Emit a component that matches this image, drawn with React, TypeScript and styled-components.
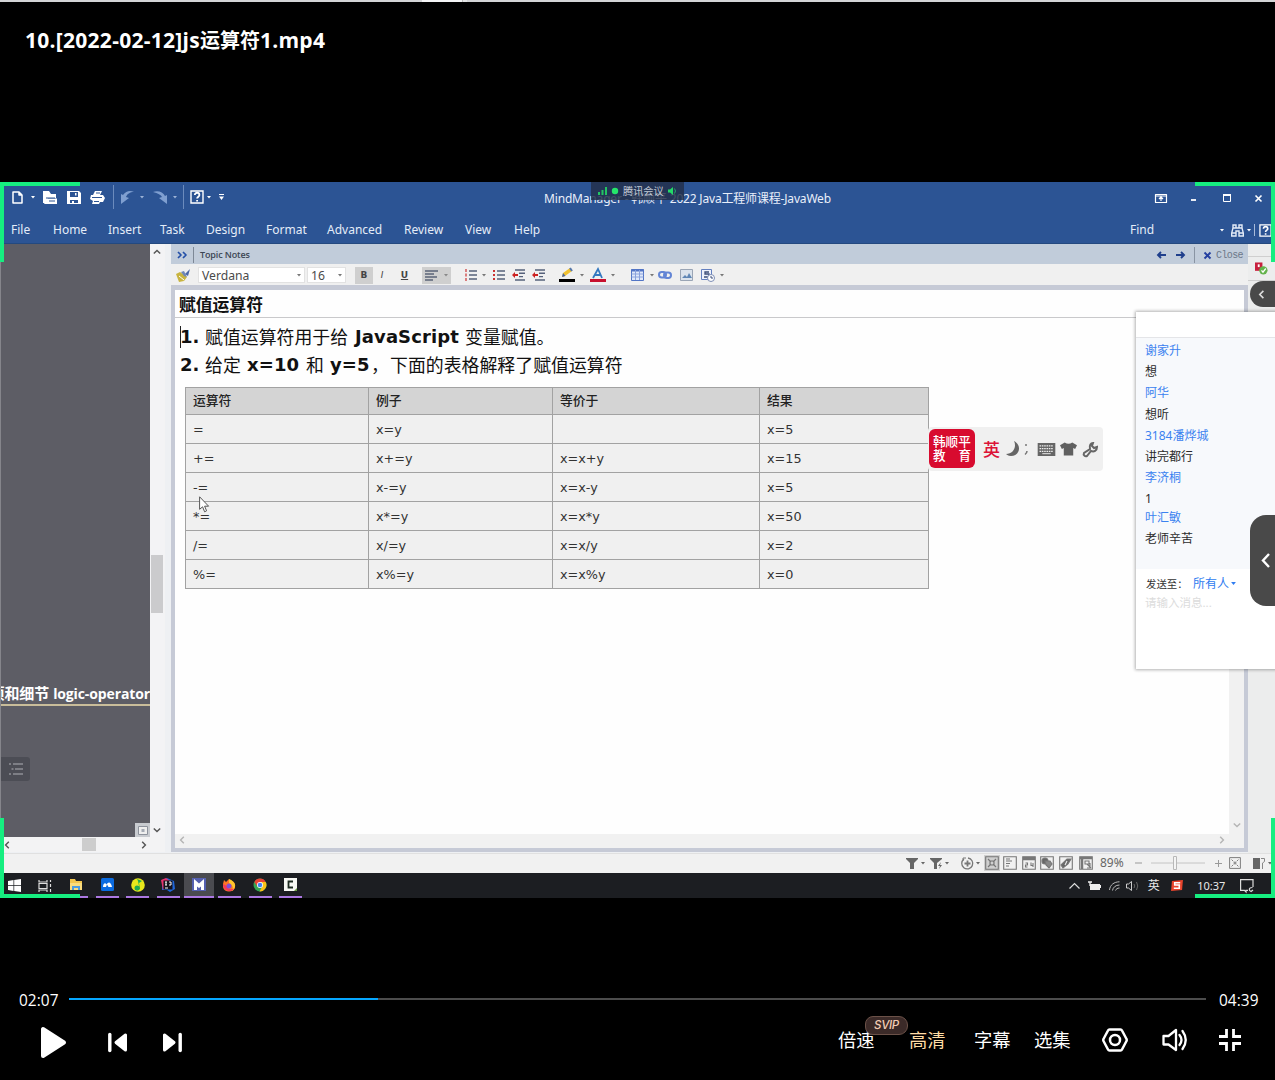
import React from "react";
import styled, { createGlobalStyle, css } from "styled-components";

const ui = `"Noto Sans", "Open Sans", "Noto Sans CJK SC", sans-serif`;
const verdana = `"DejaVu Sans", "Noto Sans CJK SC", sans-serif`;

const Global = createGlobalStyle`
  html, body { margin: 0; padding: 0; background: #000; }
  body { font-family: ${ui}; overflow: hidden; }
  * { box-sizing: border-box; }
  svg { display: block; overflow: visible; flex: none; }
`;

const Page = styled.div`
  width: 1275px;
  height: 1080px;
  display: flex;
  flex-direction: column;
  background: #000;
  overflow: hidden;
`;
const TopStrip = styled.div`
  height: 2px;
  flex: none;
  background: linear-gradient(90deg, #d3d4d6 422px, #f4f5f6 422px 462px, #bbb 462px 463px, #e3e4e5 463px 467px, #d3d4d6 467px);
`;
const Header = styled.header`
  height: 180px;
  flex: none;
  padding: 23px 0 0 25px;
`;
const FileTitle = styled.h1`
  margin: 0;
  font: 700 21px/30px "Open Sans", "Noto Sans CJK SC", sans-serif;
  letter-spacing: 0.27px;
  color: #fff;
  white-space: nowrap;
`;
const TitleHan = styled.span`
  font-size: 20px;
  letter-spacing: 0;
`;

/* ---------- recorded desktop ---------- */
const Video = styled.main`
  position: relative;
  height: 716px;
  flex: none;
  display: flex;
  flex-direction: column;
  background: #f0f0f0;
  overflow: hidden;
`;
const Corner = styled.i<{ $v: "top" | "bottom"; $h: "left" | "right" }>`
  position: absolute;
  ${(p) => p.$v}: 0;
  ${(p) => p.$h}: 0;
  width: 80px;
  height: 80px;
  border: 0 solid #16ee80;
  border-${(p) => p.$v}-width: 4px;
  border-${(p) => p.$h}-width: 4px;
  z-index: 5;
`;
const Cell = styled.div<{ $w: number; $justify?: string }>`
  width: ${(p) => p.$w}px;
  flex: none;
  display: flex;
  align-items: center;
  justify-content: ${(p) => p.$justify || "center"};
  white-space: nowrap;
`;
const TitleRow = styled.div`
  height: 32px;
  display: flex;
  flex: none;
  background: #2c5494;
  color: #fff;
`;
const QuickBar = styled.div`
  display: flex;
  width: 545px;
  height: 30px;
  padding-left: 8px;
  align-items: center;
`;
const Sep = styled.i<{ $c?: string; $h?: number }>`
  width: 1px;
  height: ${(p) => p.$h || 24}px;
  background: ${(p) => p.$c || "#6b8bbd"};
`;
const WindowTitle = styled.div`
  width: 604px;
  font-size: 12px;
  line-height: 33px;
  letter-spacing: -0.18px;
  color: #e9effa;
  white-space: nowrap;
`;
const WindowButtons = styled.div`
  display: flex;
  height: 32px;
  color: #fff;
`;
const MenuRow = styled.nav`
  height: 30px;
  flex: none;
  display: flex;
  padding: 3px 0 0 11px;
  background: #2c5494;
  border-bottom: 1px solid #24497f;
  color: #e4ecf8;
  font-size: 12px;
  line-height: 28px;
`;
const Workspace = styled.div`
  height: 609px;
  flex: none;
  display: flex;
  background: #eef0f3;
`;
const MapPane = styled.section`
  width: 165px;
  height: 608px;
  display: flex;
  flex-direction: column;
  background: #f3f3f4;
`;
const MapTop = styled.div`
  height: 593px;
  display: flex;
`;
const MapCanvas = styled.div`
  width: 150px;
  display: flex;
  flex-direction: column;
  justify-content: space-between;
  background: #5d5d65;
  border-left: 1px solid #85858b;
  overflow: hidden;
`;
const Topic = styled.div`
  margin-top: 439px;
  height: 23px;
  border-bottom: 2px solid #c9bd9a;
  color: #fff;
  font: 700 14px/21px "Open Sans", "Noto Sans CJK SC", sans-serif;
  white-space: nowrap;
  display: flex;
  justify-content: flex-end;
  letter-spacing: -0.12px;
`;
const TopicHan = styled.span`
  font-size: 15px;
  margin-right: 4px;
`;
const OutlineButton = styled.div`
  width: 29px;
  height: 24px;
  margin-top: 51px;
  border-radius: 0 3px 3px 0;
  background: #4c4d55;
  display: flex;
  align-items: center;
  justify-content: center;
`;
const FitButton = styled.div`
  width: 15px;
  height: 14px;
  align-self: flex-end;
  background: #c8cbd0;
  display: flex;
  align-items: center;
  justify-content: center;
`;
const VScroll = styled.div`
  width: 14px;
  display: flex;
  flex-direction: column;
  align-items: center;
  background: #f3f3f5;
`;
const VThumb = styled.i`
  width: 12px;
  height: 58px;
  margin: 295px 0 213px;
  background: #cbcbcd;
`;
const HScroll = styled.div`
  height: 15px;
  width: 150px;
  display: flex;
  align-items: center;
  justify-content: space-between;
  padding: 0 3px 0 4px;
`;
const HThumb = styled.i`
  width: 14px;
  height: 13px;
  margin-left: 27px;
  background: #cdcdcd;
`;
const NotesPane = styled.section`
  width: 1077px;
  height: 608px;
  margin-left: 6px;
  flex: none;
  display: flex;
  flex-direction: column;
  background: #c6cad6;
`;
const NotesHeader = styled.div`
  height: 20px;
  flex: none;
  display: flex;
  align-items: center;
  padding-top: 2px;
  background: #c1ccda;
  color: #3c4654;
`;
const NotesLabel = styled.span`
  width: 950px;
  padding-left: 6px;
  font: 600 9px/18px "Open Sans", sans-serif;
  letter-spacing: -0.12px;
`;
const CloseLabel = styled.span`
  font: 10px/18px "Liberation Mono", monospace;
  letter-spacing: -0.6px;
  color: #6c7889;
  padding: 2px 0 0 3px;
`;
const FormatBar = styled.div`
  height: 21px;
  flex: none;
  display: flex;
  align-items: center;
  padding-top: 1px;
  background: #f0f0f0;
`;
const Combo = styled.div<{ $w: number; $mr: number }>`
  width: ${(p) => p.$w}px;
  height: 16px;
  margin-right: ${(p) => p.$mr}px;
  padding: 0 3px;
  display: flex;
  align-items: center;
  justify-content: space-between;
  background: #fff;
  border: 1px solid #e2e2e2;
  color: #4a4a4a;
  font-size: 12.2px;
  line-height: 15px;
`;
const Toggle = styled.div<{ $w: number; $on?: boolean; $mr?: number; $kind?: "b" | "i" | "u" }>`
  width: ${(p) => p.$w}px;
  height: 17px;
  margin-right: ${(p) => p.$mr || 0}px;
  display: flex;
  align-items: center;
  justify-content: center;
  background: ${(p) => (p.$on ? "#cfcfcf" : "transparent")};
  font: 700 9px/16px "DejaVu Sans", sans-serif;
  color: #444;
  ${(p) => p.$kind === "i" && css`font-style: italic; font-weight: 400;`}
  ${(p) => p.$kind === "u" && css`text-decoration: underline;`}
`;
const NotesFrame = styled.div`
  width: 1069px;
  height: 558px;
  margin: 5px 0 0 4px;
  display: flex;
  flex-direction: column;
  background: #fefefe;
`;
const NoteTitle = styled.div`
  height: 28px;
  flex: none;
  padding-left: 4px;
  border-bottom: 1px solid #c9c9cb;
  color: #111;
  font: 700 16.8px/28px "Noto Sans CJK SC", sans-serif;
`;
const NoteMain = styled.div`
  height: 516px;
  flex: none;
  display: flex;
`;
const NoteText = styled.article`
  width: 1054px;
  padding: 5px 0 0 5px;
  color: #111;
`;
const Line = styled.p`
  margin: 0;
  height: 27.5px;
  display: flex;
  align-items: center;
  font: 700 18px/27px ${verdana};
  white-space: nowrap;
`;
const TextCaret = styled.i`
  width: 1px;
  height: 22px;
  margin-right: -1px;
  background: #222;
`;
const Han = styled.span<{ $w: number }>`
  width: ${(p) => p.$w}px;
  font: 400 17.9px/27px "Noto Sans CJK SC", sans-serif;
`;
const Latin = styled.span<{ $w: number }>`
  width: ${(p) => p.$w}px;
  letter-spacing: 0.1px;
`;
const Table = styled.table`
  margin: 9px 0 0 5px;
  width: 744px;
  table-layout: fixed;
  border-collapse: collapse;
  color: #333;
  font: 12.8px/20px ${verdana};
`;
const Th = styled.th`
  height: 27px;
  padding: 0 0 2px 7px;
  border: 1px solid #a2a2a2;
  background: #d4d4d4;
  text-align: left;
  font: 500 12.8px/20px "Noto Sans CJK SC", sans-serif;
  color: #222;
`;
const Td = styled.td`
  height: 29px;
  padding: 1px 0 0 7px;
  border: 1px solid #a2a2a2;
  background: #f0f0f0;
`;
const NoteVScroll = styled.div`
  width: 15px;
  display: flex;
  align-items: flex-end;
  justify-content: center;
  padding-bottom: 5px;
  background: #f1f1f1;
`;
const NoteHScroll = styled.div`
  flex: 1;
  display: flex;
  align-items: center;
  justify-content: space-between;
  padding: 0 19px 2px 4px;
  background: #f1f1f1;
`;
const RightRail = styled.aside`
  width: 27px;
  flex: none;
  padding-top: 12px;
  background: #eceded;
  display: flex;
  flex-direction: column;
`;
const RailItem = styled.div`
  height: 25px;
  border-top: 1px solid #cfcfcf;
  border-bottom: 1px solid #cfcfcf;
  display: flex;
  align-items: center;
  padding-left: 7px;
`;
const StatusBar = styled.footer`
  height: 20px;
  flex: none;
  display: flex;
  align-items: center;
  padding: 0 0 1px 904px;
  background: #f1f1f1;
  border-top: 1px solid #e0e0e0;
  color: #666;
  font-size: 12px;
  line-height: 18px;
`;
const Box = styled.div<{ $w: number; $on?: boolean }>`
  width: ${(p) => p.$w}px;
  height: 16px;
  flex: none;
  display: flex;
  align-items: center;
  justify-content: center;
  background: ${(p) => (p.$on ? "#cfcfcf" : "transparent")};
`;
const Taskbar = styled.div`
  height: 25px;
  flex: none;
  display: flex;
  background: #1c1e22;
  color: #e8e8e8;
  font-size: 11px;
`;
const TaskItem = styled.div<{ $active?: boolean }>`
  width: 30.6px;
  flex: none;
  height: 25px;
  display: flex;
  flex-direction: column;
  align-items: center;
  justify-content: space-between;
  padding-top: 5px;
  background: ${(p) => (p.$active ? "#4a4b50" : "transparent")};
  &::after {
    content: "";
    width: ${(p) => (p.$active ? 30 : 23)}px;
    height: 2px;
    background: #ac78e2;
  }
`;
const ImeMode = styled.div`
  width: 23px;
  flex: none;
  font-size: 12px;
  line-height: 25px;
  text-align: center;
`;
const Spacer = styled.i<{ $w: number }>`
  width: ${(p) => p.$w}px;
  flex: none;
`;

/* ---------- floating windows over the desktop ---------- */
const MeetingTag = styled.div`
  position: absolute;
  left: 591px;
  top: 0;
  width: 93px;
  height: 18px;
  display: flex;
  align-items: center;
  padding-left: 7px;
  background: rgba(35, 48, 74, 0.84);
  color: #c3cbd6;
  font-size: 10.2px;
  line-height: 17px;
  white-space: nowrap;
`;
const TagText = styled.span`
  width: 50px;
  padding-left: 5px;
`;
const InputBar = styled.div`
  position: absolute;
  left: 928px;
  top: 245px;
  width: 175px;
  height: 44px;
  display: flex;
  align-items: center;
  border-radius: 4px;
  background: #f0f0f0;
`;
const Brand = styled.div`
  width: 46px;
  height: 39px;
  margin: 0 8px 2px 1px;
  padding: 5px 4px 0;
  border-radius: 6px;
  background: #d80b2f;
  color: #fff;
  font: 500 12.6px/14.5px "Noto Sans CJK SC", sans-serif;
  white-space: nowrap;
`;
const BrandRow = styled.div`
  display: flex;
  justify-content: space-between;
`;
const Lang = styled.span`
  width: 22px;
  color: #dc1438;
  font: 500 17px/40px "Noto Sans CJK SC", sans-serif;
`;
const Chat = styled.aside`
  position: absolute;
  left: 1136px;
  top: 130px;
  width: 145px;
  height: 357px;
  display: flex;
  flex-direction: column;
  background: #fff;
  box-shadow: 0 0 3px 1px rgba(0, 0, 0, 0.3);
  font-size: 12px;
`;
const ChatList = styled.div`
  height: 232px;
  margin-top: 25px;
  padding: 2px 0 0 9px;
  border-top: 1px solid #e4e5e8;
  background: #f7f9fc;
`;
const Message = styled.div<{ $name?: boolean; $h: number }>`
  height: ${(p) => p.$h}px;
  line-height: 22px;
  color: ${(p) => (p.$name ? "#3b82f0" : "#2b2b2b")};
`;
const SendTo = styled.div`
  display: flex;
  align-items: center;
  height: 22px;
  margin-top: 3px;
  padding-left: 10px;
  font-size: 10.4px;
  color: #333;
  white-space: nowrap;
`;
const Everyone = styled.span`
  width: 38px;
  font-size: 12px;
  color: #2f7cf0;
`;
const Placeholder = styled.div`
  padding-left: 9px;
  font-size: 11.5px;
  line-height: 17px;
  color: #dcdcdc;
`;
const Tab = styled.div<{ $top: number; $h: number; $r: number }>`
  position: absolute;
  right: 0;
  top: ${(p) => p.$top}px;
  width: 25px;
  height: ${(p) => p.$h}px;
  border-radius: ${(p) => p.$r}px 0 0 ${(p) => p.$r}px;
  background: #494949;
  display: flex;
  align-items: center;
  justify-content: center;
  z-index: 4;
`;
const Pointer = styled.div`
  position: absolute;
  left: 199px;
  top: 314px;
`;

/* ---------- player controls ---------- */
const Controls = styled.footer`
  flex: 1;
  display: flex;
  flex-direction: column;
  color: #fff;
`;
const ProgressRow = styled.div`
  margin-top: 90px;
  height: 24px;
  display: flex;
  align-items: center;
  font: 15.4px/24px "Open Sans", sans-serif;
`;
const Time = styled.span<{ $w: number; $pad: number }>`
  width: ${(p) => p.$w}px;
  padding: 2px 0 0 ${(p) => p.$pad}px;
  letter-spacing: 0.05px;
`;
const Track = styled.div`
  width: 1137px;
  height: 2px;
  margin-top: -2px;
  background: #4c4c4c;
`;
const Played = styled.div`
  height: 2px;
  background: #06a7ff;
`;
const ButtonRow = styled.div`
  height: 60px;
  display: flex;
  align-items: center;
`;
const TextButton = styled.span<{ $w: number; $gold?: boolean }>`
  position: relative;
  width: ${(p) => p.$w}px;
  height: 32px;
  font: 400 18.3px/26px "Noto Sans CJK SC", sans-serif;
  color: ${(p) => (p.$gold ? "#ffdca6" : "#fff")};
`;
const Svip = styled.b`
  position: absolute;
  left: 27px;
  top: -10px;
  width: 43px;
  height: 19px;
  border: 1px solid #6b5148;
  border-radius: 8px 9px 9px 8px;
  background: #3b2a28;
  color: #f3cdb4;
  font: italic 500 11.5px/17px Inter, sans-serif;
  letter-spacing: -0.3px;
  text-align: center;
`;
const SvgLift = styled.div`
  padding-bottom: 4px;
  flex: none;
`;
const HelpWrap = styled.div`
  display: flex;
  align-items: center;
  width: 14px;
  flex: none;
`;
const ArrowBox = styled.div`
  height: 16px;
  display: flex;
  align-items: center;
`;

const Caret = ({ c = "#fff", s = 4 }: { c?: string; s?: number }) => (
  <svg width={s} height={s / 2 + 0.5} viewBox="0 0 8 5"><path d="M0 0h8L4 5z" fill={c} /></svg>
);
const Chev = ({ d, c = "#555", w = 1.8, s = 8 }: { d: "l" | "r" | "u" | "d"; c?: string; w?: number; s?: number }) => {
  const p = { l: "M6 1 2 5l4 4", r: "M4 1l4 4-4 4", u: "M1 7l4-4 4 4", d: "M1 3l4 4 4-4" }[d];
  return <svg width={s} height={s} viewBox="0 0 10 10"><path d={p} fill="none" stroke={c} strokeWidth={w} /></svg>;
};
const Stroke = ({ w = 14, h = 14, d, c = "#fff", sw = 1.5, fill = "none" }: { w?: number; h?: number; d: string; c?: string; sw?: number; fill?: string }) => (
  <svg width={w} height={h} viewBox={`0 0 ${w} ${h}`}><path d={d} fill={fill} stroke={c} strokeWidth={sw} strokeLinejoin="round" /></svg>
);
const HelpIcon = ({ s = 14 }: { s?: number }) => (
  <svg width={s} height={s} viewBox="0 0 14 14" fill="none" stroke="#fff" strokeWidth="1.4">
    <path d="M1 1h12v12H1z" /><path d="M4.800 5c0-3 4.600-3 4.600 0 0 1.700-2.300 1.700-2.300 3.600M7.100 10v1.500" strokeWidth="1.800" />
  </svg>
);
const ListIcon = ({ kind }: { kind: "num" | "dot" | "out" | "in" }) => (
  <svg width="14" height="12" viewBox="0 0 14 12">
    <path d={kind === "num" || kind === "dot" ? "M5 2h8M5 6h8M5 10h8" : "M3 1h10M7 4.300h6M7 7.600h4M3 11h10"} stroke="#56617a" strokeWidth="1.400" />
    {kind === "num" && <path d="M2 0v3M2 4.500v3M2 9v3" stroke="#c33" strokeWidth="1.200" />}
    {kind === "dot" && <path d="M1 1h2v2H1zM1 5h2v2H1zM1 9h2v2H1z" fill="#c33" />}
    {(kind === "out" || kind === "in") && <path d="M0 6l3-3v2h3v2H3v2z" fill="#c22" />}
  </svg>
);
const NavArrow = ({ flip }: { flip?: boolean }) => (
  <svg width="9" height="8" viewBox="0 0 9 8"><path d={flip ? "M0 4h8M5 1l3 3-3 3" : "M9 4H1M4 1 1 4l3 3"} fill="none" stroke="#1f3f8c" strokeWidth="1.900" /></svg>
);

const menus: [string, number][] = [
  ["File", 42], ["Home", 55], ["Insert", 52], ["Task", 46], ["Design", 60], ["Format", 61],
  ["Advanced", 77], ["Review", 61], ["View", 49], ["Help", 616],
];
const rows = [
  ["=", "x=y", "", "x=5"],
  ["+=", "x+=y", "x=x+y", "x=15"],
  ["-=", "x-=y", "x=x-y", "x=5"],
  ["*=", "x*=y", "x=x*y", "x=50"],
  ["/=", "x/=y", "x=x/y", "x=2"],
  ["%=", "x%=y", "x=x%y", "x=0"],
];
const chat: [string, boolean, number][] = [
  ["谢家升", true, 21], ["想", false, 21], ["阿华", true, 21.5], ["想听", false, 21], ["3184潘烨城", true, 21],
  ["讲完都行", false, 21.5], ["李济桐", true, 21], ["1", false, 19], ["叶汇敏", true, 21], ["老师辛苦", false, 21],
];

const TitleBar = () => (
  <TitleRow>
    <QuickBar>
      <Cell $w={18}><Stroke w={11} h={13} d="M1 1h6l3 3v8H1zM7 1v3h3" /></Cell>
      <Cell $w={13}><Caret /></Cell>
      <Cell $w={21}><svg width="14" height="13" viewBox="0 0 14 13"><path d="M0 0h6l2 3h5v4H5l-2 5H0z" fill="#fff" /><path d="M4 7.500h10V13H1z" fill="#fff" /><path d="M3 7h9M6 10h6" stroke="#2c5494" /></svg></Cell>
      <Cell $w={27}><svg width="14" height="13" viewBox="0 0 14 13"><path d="M0 0h12l2 2v11H0z" fill="#fff" /><path d="M3 1h8v5H3zM3 9h8v3H3z" fill="#2c5494" /><path d="M5 10h2v2H5zM8 2h1.500v2.500H8z" fill="#fff" /></svg></Cell>
      <Cell $w={21}><svg width="15" height="13" viewBox="0 0 15 13"><path d="M3 4 5 0h7l-2 4h3l2 3-2 4H10l-1 2H2l1-3-3-2 1-4z" fill="#fff" /><path d="M6 2h4M2 6.500h10M4 10.500h5" stroke="#2c5494" /></svg></Cell>
      <Cell $w={11}><Sep /></Cell>
      <Cell $w={16}><svg width="15" height="13" viewBox="0 0 15 13"><path d="M1 3l2 1c3-4 7-5 11-3-4 0-7 2-8 5l3 1-8 6z" fill="#7f9fd0" /></svg></Cell>
      <Cell $w={14}><Caret c="#9db3d6" /></Cell>
      <Cell $w={22}><svg width="15" height="13" viewBox="0 0 15 13"><path d="M0 1c5-2 10 0 12 4l2-1v9L6 7l3-1C8 4 5 2 0 1z" fill="#7f9fd0" /></svg></Cell>
      <Cell $w={8}><Caret c="#9db3d6" /></Cell>
      <Cell $w={9}><Sep /></Cell>
      <Cell $w={18}><HelpIcon /></Cell>
      <Cell $w={6}><Caret /></Cell>
      <Cell $w={18}><svg width="5" height="6" viewBox="0 0 5 6"><path d="M0 .5h5" stroke="#fff" /><path d="M0 2.500h5L2.500 6z" fill="#fff" /></svg></Cell>
    </QuickBar>
    <WindowTitle>MindManager - 韩顺平 2022 Java工程师课程-JavaWeb</WindowTitle>
    <WindowButtons>
      <Cell $w={28}><Stroke w={12} h={9} sw={1.2} d="M.5.5h11v8H.5zM.5 2h11M6 7V3.500M4 5l2-2 2 2" /></Cell>
      <Cell $w={38}><Stroke w={6} h={8} sw={1.8} d="M0 6h5" /></Cell>
      <Cell $w={28}><svg width="8" height="8" viewBox="0 0 8 8"><path d="M.5 1h7v6.500h-7z" fill="none" stroke="#fff" /><path d="M0 1h8" stroke="#fff" strokeWidth="2" /></svg></Cell>
      <Cell $w={34}><Stroke w={7} h={7} sw={1.6} d="M.5.5l6 6M6.500.5l-6 6" /></Cell>
    </WindowButtons>
  </TitleRow>
);

const Toolbar = () => (
  <FormatBar>
    <Cell $w={27} $justify="flex-start"><Spacer $w={5} /><svg width="14" height="13" viewBox="0 0 14 13"><path d="M0 5l4-2 7 5-3 4-5 1z" fill="#c8b440" /><path d="M3 7l5 4" stroke="#fff" /><path d="M5 3l3-1 3 6-3-1z" fill="#6f86b8" /><path d="M9 5l5-5-2 7z" fill="#4a67a8" /></svg></Cell>
    <Combo $w={107} $mr={2}>Verdana<Caret c="#777" /></Combo>
    <Combo $w={39} $mr={9}>16<Caret c="#777" /></Combo>
    <Toggle $w={18} $on $kind="b">B</Toggle>
    <Toggle $w={18} $kind="i">I</Toggle>
    <Toggle $w={27} $kind="u" $mr={4}>U</Toggle>
    <Toggle $w={29} $on $mr={12}><Stroke w={14} h={11} c="#5b6478" d="M0 1h13M0 4h9M0 7h12M0 10h8" /><Spacer $w={5} /><Caret c="#888" /></Toggle>
    <Cell $w={16}><ListIcon kind="num" /></Cell>
    <Cell $w={10}><Caret c="#777" /></Cell>
    <Cell $w={19}><ListIcon kind="dot" /></Cell>
    <Cell $w={21}><ListIcon kind="out" /></Cell>
    <Cell $w={20}><ListIcon kind="in" /></Cell>
    <Spacer $w={5} />
    <Cell $w={26}><svg width="16" height="14" viewBox="0 0 16 14"><path d="M0 11h16v3H0z" fill="#000" /><path d="M3 9l1-4 7-5 2 3-7 5z" fill="#f0c030" /><path d="M3 9l1-4 2.500 3z" fill="#48639e" /><path d="M11 0l2 3" stroke="#5577aa" strokeWidth="2" /></svg></Cell>
    <Caret c="#777" />
    <Cell $w={27}><svg width="16" height="14" viewBox="0 0 16 14"><path d="M0 11h16v3H0z" fill="#c8102e" /><path d="M3 10 8 1l4 9M5 7h6" fill="none" stroke="#3478c0" strokeWidth="1.800" /></svg></Cell>
    <Caret c="#777" />
    <Spacer $w={9} />
    <Cell $w={26}><svg width="13" height="12" viewBox="0 0 13 12"><path d="M.5.5h12v11H.5z" fill="#dfe8fa" stroke="#5275c5" /><path d="M0 1.500h13" stroke="#5275c5" strokeWidth="2" /><path d="M.5 5h12M.5 8h12M4.500 1v10M8.500 1v10" stroke="#8aa2dc" /></svg></Cell>
    <Caret c="#777" />
    <Cell $w={22}><svg width="14" height="8" viewBox="0 0 14 8" fill="none" stroke="#6385d5" strokeWidth="2"><rect x="1" y="1" width="7" height="5.500" rx="2.700" /><rect x="6" y="1.500" width="7" height="5.500" rx="2.700" /></svg></Cell>
    <Cell $w={20}><svg width="13" height="12" viewBox="0 0 13 12"><path d="M.5.5h12v11H.5z" fill="#dbe3ec" stroke="#9aa5b5" /><path d="M2 9l3-3 2 2 2-4 3 5z" fill="#5f86b5" /></svg></Cell>
    <Cell $w={24}><svg width="14" height="13" viewBox="0 0 14 13"><path d="M.5.5h10v10H.5z" fill="#eef2fb" stroke="#6480c0" /><path d="M8 3H4v2h4v3H3" fill="none" stroke="#3d4d78" strokeWidth="1.300" /><circle cx="10" cy="9" r="3.500" fill="#fff" stroke="#7c8db5" /><path d="M10 7v2h2" fill="none" stroke="#3d4d78" /></svg></Cell>
    <Caret c="#777" />
  </FormatBar>
);

const Notes = () => (
  <NotesPane>
    <NotesHeader>
      <Cell $w={22}><Stroke w={10} h={8} c="#2450a8" sw={1.7} d="M1 1l3 3-3 3M6 1l3 3-3 3" /></Cell>
      <Sep $c="#7d8896" $h={16} />
      <NotesLabel>Topic Notes</NotesLabel>
      <Spacer $w={9} />
      <Cell $w={16}><NavArrow /></Cell>
      <Cell $w={18}><Spacer $w={4} /><NavArrow flip /></Cell>
      <Cell $w={14}><Sep $c="#8994a3" $h={16} /></Cell>
      <Cell $w={12}><Stroke w={7} h={7} c="#243fa0" sw={1.9} d="M.5.5l6 6M6.500.5l-6 6" /></Cell>
      <CloseLabel>Close</CloseLabel>
    </NotesHeader>
    <Toolbar />
    <NotesFrame>
      <NoteTitle>赋值运算符</NoteTitle>
      <NoteMain>
        <NoteText>
          <Line>
            <TextCaret /><Latin $w={25}>1.</Latin><Han $w={150}>赋值运算符用于给</Han><Latin $w={110}>JavaScript</Latin><Han $w={90}>变量赋值。</Han>
          </Line>
          <Line>
            <Latin $w={25}>2.</Latin><Han $w={42}>给定</Han><Latin $w={59}>x=10</Latin><Han $w={24}>和</Han><Latin $w={41}>y=5</Latin><Han $w={19}>，</Han><Han $w={240}>下面的表格解释了赋值运算符</Han>
          </Line>
          <Table>
            <colgroup><col width="183" /><col width="184" /><col width="207" /><col width="169" /></colgroup>
            <thead><tr>{["运算符", "例子", "等价于", "结果"].map((t) => <Th key={t}>{t}</Th>)}</tr></thead>
            <tbody>{rows.map((r) => <tr key={r[0]}>{r.map((t, i) => <Td key={i}>{t}</Td>)}</tr>)}</tbody>
          </Table>
        </NoteText>
        <NoteVScroll><Chev d="d" c="#b5b5b5" /></NoteVScroll>
      </NoteMain>
      <NoteHScroll><Chev d="l" c="#b5b5b5" /><Chev d="r" c="#b5b5b5" /></NoteHScroll>
    </NotesFrame>
  </NotesPane>
);

const Frame = ({ children, s = 14 }: { children?: React.ReactNode; s?: number }) => (
  <svg width={s} height={s} viewBox="0 0 14 14" fill="none" stroke="#777" strokeWidth="1.100"><path d="M.7.7h12.600v12.600H.7z" />{children}</svg>
);

const Status = () => (
  <StatusBar>
    <Box $w={15}><svg width="12" height="11" viewBox="0 0 12 11"><path d="M0 0h12v1L8 5v6H4V5L0 1z" fill="#666" /></svg></Box>
    <Box $w={7}><Caret c="#666" /></Box>
    <Box $w={20}><svg width="12" height="11" viewBox="0 0 12 11"><path d="M0 0h12v1L7 5v6H4V5L0 1z" fill="#666" /><path d="M11 4 8 8h2l-1 3 3-4h-2z" fill="#666" /></svg></Box>
    <Box $w={2}><Caret c="#666" /></Box>
    <Spacer $w={10} />
    <Box $w={18}><svg width="13" height="13" viewBox="0 0 13 13" fill="none" stroke="#777"><path d="M7 1a5.500 5.500 0 1 1-4 1" strokeWidth="1.300" /><path d="M3.500 6.500h6M6.500 3.500v6" strokeWidth="1.800" /><path d="M2 4V1h3" /></svg></Box>
    <Caret c="#666" />
    <Spacer $w={4} />
    <Box $w={16} $on><Frame><path d="M3 3l3 3M11 3 8 6M3 11l3-3M11 11 8 8M5 5h4v4H5z" /></Frame></Box>
    <Box $w={20}><Frame><path d="M3 3h4M3 5h6M3 7.500h4M3 10h3" /></Frame></Box>
    <Box $w={17}><Frame><path d="M1 2.500h12" strokeWidth="3.500" /><path d="M3.500 7h2v2h-2v2h2M9 6.500v3h2.500M11 7v4" /></Frame></Box>
    <Box $w={20}><Frame><circle cx="5" cy="5" r="3" fill="#666" /><path d="M5 5h5l2 3-3 4-3-3z" fill="#888" /></Frame></Box>
    <Box $w={18}><Frame><path d="M2 9 8 3h4L9 8l-5 4z" fill="#666" /><path d="M8 5l-2 4" stroke="#eee" /></Frame></Box>
    <Box $w={21}><Frame><path d="M1 2h12M3 1v12" strokeWidth="2.500" /><path d="M6 5h4v3H6zM8 8l4 4M11 7v5H8" /></Frame></Box>
    <Spacer $w={4} />
    <Cell $w={27} $justify="flex-start">89%</Cell>
    <Cell $w={22}><Stroke w={7} h={4} sw={1} c="#999" d="M0 2h7" /></Cell>
    <Cell $w={58}><svg width="54" height="14" viewBox="0 0 54 14"><path d="M0 7h54" stroke="#c4c4c4" /><path d="M22.500.5h3v13h-3z" fill="#f4f4f4" stroke="#b8b8b8" /></svg></Cell>
    <Cell $w={22}><Stroke w={7} h={7} sw={1} c="#999" d="M0 3.500h7M3.500 0v7" /></Cell>
    <Frame s={12}><path d="M3 3l2 2M11 3 9 5M3 11l2-2M11 11 9 9M6 6h2v2H6z" /></Frame>
    <Spacer $w={12} />
    <svg width="12" height="11" viewBox="0 0 12 11"><path d="M0 0h7v11H0z" fill="#666" /><path d="M8 .5h3.500v3L9.500 5v6" fill="none" stroke="#888" /></svg>
    <Spacer $w={3} />
    <Caret c="#666" />
  </StatusBar>
);

const SystemTaskbar = () => (
  <Taskbar>
    <Cell $w={29}><svg width="13" height="13" viewBox="0 0 13 13"><path d="M0 2l5.500-1v5H0zM6.200.9 13 0v6H6.200zM0 6.800h5.500V12L0 11zM6.200 6.800H13V13l-6.800-1z" fill="#fff" /></svg></Cell>
    <Cell $w={31}><svg width="14" height="12" viewBox="0 0 14 12" fill="none" stroke="#ddd" strokeWidth="1.200"><path d="M1 0v2h8V0M1 12v-2h8v2M1 3.500h8v5H1zM12.500 0v2M12.500 4v3M12.500 9v3" /></svg></Cell>
    <Spacer $w={1.2} />
    <TaskItem><svg width="14" height="13" viewBox="0 0 14 13"><path d="M1 1h5l1 2h6v9H1z" fill="#f2c54e" /><path d="M1 5h12v7H1z" fill="#fadb7c" /><path d="M3 12V8h8v4H9v-2H5v2z" fill="#4b9be0" /></svg></TaskItem>
    <TaskItem><svg width="13" height="13" viewBox="0 0 13 13"><rect width="13" height="13" rx="1.500" fill="#0b6be0" /><path d="M2 9c0-3 2-5 3.500-2.500C7.500 3 10 4 11 9z" fill="#fff" /><path d="M5 9l1-2.500L7.500 9" fill="#0b6be0" /></svg></TaskItem>
    <TaskItem><svg width="14" height="14" viewBox="0 0 14 14"><circle cx="7" cy="7" r="6.800" fill="#e8e81c" /><path d="M6 1l5 2-3 2 1 6c-3 3-6 0-3-2l2-1-1-5z" fill="#1fab52" /><circle cx="6" cy="10" r="2.500" fill="#1fab52" /></svg></TaskItem>
    <TaskItem><svg width="14" height="14" viewBox="0 0 14 14"><path d="M1 2l5-2 7 3 1 8-5 3-3-2H1z" fill="#1f66d8" /><path d="M0 2l5-2 4 3-7 9z" fill="#e8336d" /><path d="M2.500 2.500h9v9h-9z" fill="#15131c" /><path d="M4 4h2M5 4v3M4 7h2M8 4h2v3H8M4 10h3" stroke="#fff" fill="none" /></svg></TaskItem>
    <TaskItem $active><svg width="14" height="13" viewBox="0 0 14 13"><rect width="14" height="13" fill="#5560b0" /><path d="M2 1l5 4.500L12 1v11H9V8.500L7 10 5 8.500V12H2z" fill="#fff" /></svg></TaskItem>
    <TaskItem><svg width="14" height="14" viewBox="0 0 14 14"><path d="M1 6 2 2l2 2 3-3 1 2c3-1 6 3 5 6-1 6-11 6-12 0z" fill="#ff7425" /><path d="M7 1c3 1 7 4 6 8-1 3-3 4-3 4 2-4 0-6-3-8z" fill="#ffc62c" /><path d="M1 6c0 8 9 9 12 4-3 2-7 2-8-2L3 7z" fill="#f4385b" /><circle cx="7" cy="8" r="2.500" fill="#8050d8" /></svg></TaskItem>
    <TaskItem><svg width="14" height="14" viewBox="0 0 14 14"><circle cx="7" cy="7" r="6.500" fill="#35a653" /><path d="M1.300 4A6.500 6.500 0 0 1 12.700 4H7L4.500 8.500z" fill="#ea4335" /><path d="M12.700 4A6.500 6.500 0 0 1 6.500 13.500L9.500 8 7 4z" fill="#fbc116" /><circle cx="7" cy="7" r="3" fill="#fff" /><circle cx="7" cy="7" r="2.300" fill="#4285f4" /></svg></TaskItem>
    <TaskItem><svg width="13" height="13" viewBox="0 0 13 13"><path d="M0 0h13v13H0z" fill="#f7f8f4" /><path d="M9 3.500H4.500v6H9" fill="none" stroke="#1c2a20" strokeWidth="1.800" /><path d="M10 13l3-3v3z" fill="#6c9c43" /></svg></TaskItem>
    <Spacer $w={758.4} />
    <Cell $w={20}><svg width="11" height="6" viewBox="0 0 11 6"><path d="M.5 5.500l5-5 5 5" fill="none" stroke="#ddd" strokeWidth="1.200" /></svg></Cell>
    <Cell $w={21}><svg width="13" height="8" viewBox="0 0 13 8"><path d="M2 2h10v1h1v3h-1v2H2z" fill="#eee" /><path d="M0 0h4M2 0v4" stroke="#eee" strokeWidth="1.300" /></svg></Cell>
    <Cell $w={18}><svg width="11" height="10" viewBox="0 0 11 10" fill="none" stroke="#bbb"><path d="M.5 9C1 4 5 .8 10.500.8M3.500 9.500c.5-3 3-5.500 7-5.500M6.500 9.500C7 8 8.500 7 10.500 7" /></svg></Cell>
    <Cell $w={19}><svg width="13" height="10" viewBox="0 0 13 10" fill="none" stroke="#ccc"><path d="M.5 3h2l3-2.500v9L2.500 7h-2z" /><path d="M8 3q1.500 2 0 4M10.500 1q2.500 4 0 8" stroke="#666" /></svg></Cell>
    <ImeMode>英</ImeMode>
    <Cell $w={24}><svg width="12" height="11" viewBox="0 0 13 12"><path d="M1 1l12-1-1 11-12 1z" fill="#e8442c" /><path d="M10 3H4v2.500h5V9H3" fill="none" stroke="#fff" strokeWidth="1.700" /></svg></Cell>
    <Cell $w={44}>10:37</Cell>
    <Cell $w={28}><svg width="14" height="13" viewBox="0 0 14 13" fill="none" stroke="#ddd" strokeWidth="1.200"><path d="M13 8V.6H.6v10.800H4.500L6 13v-1.600h2" /><path d="M12.500 8.500c-4 0-4 3-1.500 4l2-1.500" /></svg></Cell>
  </Taskbar>
);

export default function App() {
  return (
    <Page>
      <Global />
      <TopStrip />
      <Header><FileTitle>10.[2022-02-12]js<TitleHan>运算符</TitleHan>1.mp4</FileTitle></Header>
      <Video>
        <TitleBar />
        <MenuRow>
          {menus.map(([t, w]) => <Cell key={t} $w={w} $justify="flex-start">{t}</Cell>)}
          <Cell $w={88} $justify="flex-start">Find</Cell>
          <Cell $w={8}><Caret /></Cell>
          <Cell $w={22}><svg width="13" height="13" viewBox="0 0 13 13" fill="none" stroke="#e4ecf8" strokeWidth="1.400"><path d="M2 1h3v3h3V1h3v3l1.300 5v3H8V7H5v5H.7V9L2 4zM.7 9H5M8 9h4.300M2 4h3M8 4h3" /></svg></Cell>
          <Cell $w={2}><Caret /></Cell>
          <Cell $w={9}><Sep $h={12} $c="#a9bbda" /></Cell>
          <HelpWrap><HelpIcon s={13} /></HelpWrap>
        </MenuRow>
        <Workspace>
          <MapPane>
            <MapTop>
              <MapCanvas>
                <div>
                  <Topic><TopicHan>项和细节</TopicHan>logic-operator</Topic>
                  <OutlineButton><Stroke w={14} h={12} c="#aeb0b6" sw={1.2} d="M4 1h10M6 6h8M4 11h10M0 1h2M2.500 6h2M0 11h2" /></OutlineButton>
                </div>
                <FitButton><svg width="10" height="9" viewBox="0 0 10 9"><path d="M.5.5h9v8h-9z" fill="#eee" stroke="#8d929c" /><path d="M3.500 3h3v3h-3z" fill="#a5abb5" /></svg></FitButton>
              </MapCanvas>
              <VScroll>
                <ArrowBox><Chev d="u" /></ArrowBox>
                <VThumb />
                <Chev d="d" />
              </VScroll>
            </MapTop>
            <HScroll><Chev d="l" /><HThumb /><Chev d="r" /></HScroll>
          </MapPane>
          <Notes />
          <RightRail>
            <RailItem><svg width="13" height="13" viewBox="0 0 14 13"><path d="M0 0h8v9H0z" fill="#c8203e" /><path d="M3 2h2v3H3z" fill="#fff" /><circle cx="9" cy="8.500" r="4.500" fill="#63b34c" /><path d="M7 8.500l1.600 2 3-4" fill="none" stroke="#fff" strokeWidth="1.400" /></svg></RailItem>
          </RightRail>
        </Workspace>
        <Status />
        <SystemTaskbar />

        <MeetingTag>
          <svg width="9" height="8" viewBox="0 0 9 8"><path d="M1 8V5M4.500 8V3M8 8V0" stroke="#23c463" strokeWidth="2" /></svg>
          <Spacer $w={5} />
          <svg width="6" height="6" viewBox="0 0 6 6"><circle cx="3" cy="3" r="3.200" fill="#25e56b" /></svg>
          <TagText>腾讯会议</TagText>
          <svg width="9" height="8" viewBox="0 0 9 8"><path d="M0 2.500h2L5 0v8L2 5.500H0z" fill="#25d968" /><path d="M6.500 1.500q2 2.500 0 5" fill="none" stroke="#25a968" /></svg>
        </MeetingTag>
        <InputBar>
          <Brand>
            <BrandRow><span>韩顺平</span></BrandRow>
            <BrandRow><span>教</span><span>育</span></BrandRow>
          </Brand>
          <Lang>英</Lang>
          <svg width="25" height="16" viewBox="0 0 25 16"><path d="M9 0c8 4 6 15-3 15-3 0-5-2-5-2 7 0 11-7 8-13z" fill="#666" /><path d="M21 3v2M22 10q0 2-2 3.500" stroke="#777" strokeWidth="1.500" fill="none" /></svg>
          <Spacer $w={7} />
          <svg width="19" height="13" viewBox="0 0 19 14"><path d="M0 0h19v14H0z" fill="#666" /><path d="M2 3h15M2 6h15M2 9h15" stroke="#eee" strokeWidth="1.300" strokeDasharray="1.700 .8" /><path d="M5 11.500h9" stroke="#eee" /></svg>
          <Spacer $w={4} />
          <svg width="17" height="14" viewBox="0 0 18 14"><path d="M0 3l5-3q4 3 8 0l5 3-2 4-2-1v8H4V6L2 7z" fill="#606060" /></svg>
          <Spacer $w={6} />
          <svg width="15" height="15" viewBox="0 0 15 15"><path d="M10 1 9 4l2 2 3-1c0 4-3 5-6 4l-4 5c-2 1-4-1-3-3l6-4c-1-4 1-6 3-6z" fill="none" stroke="#666" strokeWidth="2" /></svg>
        </InputBar>
        <Pointer><svg width="11" height="17" viewBox="0 0 11 17"><path d="M.6.8v12.500l3-2.500 2 5 2-1-2-4.600h4z" fill="#fff" stroke="#555" strokeWidth="1" /></svg></Pointer>
        <Chat>
          <ChatList>{chat.map(([t, n, h]) => <Message key={t} $name={n} $h={h}>{t}</Message>)}</ChatList>
          <SendTo><Cell $w={47} $justify="flex-start">发送至：</Cell><Everyone>所有人</Everyone><Caret c="#2f7cf0" s={5} /></SendTo>
          <Placeholder>请输入消息...</Placeholder>
        </Chat>
        <Tab $top={99} $h={26} $r={13}><Chev d="l" c="#ddd" s={9} /></Tab>
        <Tab $top={333} $h={91} $r={16}><Spacer $w={6} /><svg width="9" height="15" viewBox="0 0 9 15"><path d="M8 1 2 7.500 8 14" fill="none" stroke="#fff" strokeWidth="2.400" /></svg></Tab>
        <Corner $v="top" $h="left" />
        <Corner $v="top" $h="right" />
        <Corner $v="bottom" $h="left" />
        <Corner $v="bottom" $h="right" />
      </Video>
      <Controls>
        <ProgressRow>
          <Time $w={69} $pad={19}>02:07</Time>
          <Track><Played style={{ width: `${(309 / 1137) * 100}%` }} /></Track>
          <Time $w={69} $pad={13}>04:39</Time>
        </ProgressRow>
        <ButtonRow>
          <Spacer $w={41} />
          <svg width="25" height="31" viewBox="0 0 25 31"><path d="M2 2v27L23 15.500z" fill="#fff" stroke="#fff" strokeWidth="4" strokeLinejoin="round" /></svg>
          <Spacer $w={42} />
          <svg width="19" height="19" viewBox="0 0 19 19"><path d="M1.800 1.500v16" stroke="#fff" strokeWidth="3.400" strokeLinecap="round" /><path d="M17.500 2v15L8 9.500z" fill="#fff" stroke="#fff" strokeWidth="3" strokeLinejoin="round" /></svg>
          <Spacer $w={36} />
          <svg width="19" height="19" viewBox="0 0 19 19"><path d="M17.200 1.500v16" stroke="#fff" strokeWidth="3.400" strokeLinecap="round" /><path d="M1.500 2v15L11 9.500z" fill="#fff" stroke="#fff" strokeWidth="3" strokeLinejoin="round" /></svg>
          <Spacer $w={656} />
          <TextButton $w={71}>倍速<Svip>SVIP</Svip></TextButton>
          <TextButton $w={65} $gold>高清</TextButton>
          <TextButton $w={60}>字幕</TextButton>
          <TextButton $w={68}>选集</TextButton>
          <SvgLift><svg width="26" height="24" viewBox="0 0 26 24" fill="none" stroke="#fff" strokeWidth="2.500"><path d="M7.500 1.500h11q1 0 1.500 1l4.500 8.500q.6 1 0 2L20 21.500q-.5 1-1.500 1h-11q-1 0-1.500-1L1.500 13q-.6-1 0-2L6 2.500q.5-1 1.500-1z" /><circle cx="13" cy="12" r="5" /></svg></SvgLift>
          <Spacer $w={34} />
          <SvgLift><svg width="26" height="24" viewBox="0 0 26 24" fill="none" stroke="#fff" strokeWidth="2.300" strokeLinejoin="round"><path d="M1.500 8h5L14 2v20l-7.500-5.500h-5z" /><path d="M17.500 7q4 5 0 10M20.500 3q6.500 9 0 18" strokeLinecap="round" /></svg></SvgLift>
          <Spacer $w={31} />
          <SvgLift><svg width="22" height="22" viewBox="0 0 22 22" fill="none" stroke="#fff" strokeWidth="2.800"><path d="M7.500 0v7.500H0M14.500 0v7.500H22M7.500 22v-7.500H0M14.500 22v-7.500H22" /></svg></SvgLift>
        </ButtonRow>
      </Controls>
    </Page>
  );
}
